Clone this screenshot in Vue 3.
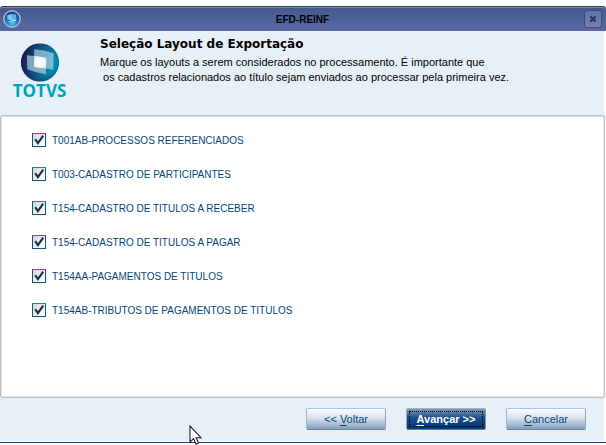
<template>
  <div class="wizard">
    <header class="titlebar">
      <svg class="app-icon" viewBox="0 0 18 18" aria-hidden="true">
        <defs>
          <radialGradient id="orb" cx="50%" cy="80%" r="70%">
            <stop offset="0" stop-color="#3cc0f4" />
            <stop offset="0.55" stop-color="#1a78c4" />
            <stop offset="1" stop-color="#0b4a96" />
          </radialGradient>
        </defs>
        <circle cx="9" cy="9" r="8.2" fill="url(#orb)" stroke="#b3b8bd" stroke-width="1.4" />
        <path d="M4.4 5.4 L6.8 4.6 V9.4 L4.4 8.9 Z" fill="#8fcdf2" />
        <path d="M8.4 4.2 L13 4.4 V10.2 L8.4 9.4 Z" fill="#5fb1e8" />
        <path d="M7.8 4.2 V9.8 L12.8 10.8" fill="none" stroke="#e9f6fe" stroke-width="1" />
        <path d="M6 11.4 L11.4 12.6" stroke="#a9dcf7" stroke-width="0.9" />
      </svg>
      <h1 class="window-title">EFD-REINF</h1>
      <button type="button" class="close" aria-label="Fechar">
        <svg viewBox="0 0 8 8" aria-hidden="true">
          <path d="M1.4 1.6 L6.6 6.4 M6.6 1.6 L1.4 6.4" stroke="#2a3150" stroke-width="2" />
        </svg>
      </button>
    </header>

    <section class="intro">
      <div class="brand">
        <svg class="globe" viewBox="0 0 40 40" aria-hidden="true">
          <defs>
            <linearGradient id="ball" x1="0" y1="0.3" x2="1" y2="0.6">
              <stop offset="0" stop-color="#1c1650" />
              <stop offset="0.45" stop-color="#12527f" />
              <stop offset="1" stop-color="#00a3c4" />
            </linearGradient>
            <radialGradient id="shade" cx="50%" cy="45%" r="55%">
              <stop offset="0.7" stop-color="#12124a" stop-opacity="0" />
              <stop offset="1" stop-color="#12124a" stop-opacity="0.35" />
            </radialGradient>
            <radialGradient id="glow" cx="45%" cy="55%" r="65%">
              <stop offset="0" stop-color="#fff" />
              <stop offset="0.65" stop-color="#f0f9fd" />
              <stop offset="1" stop-color="#c3e0ee" />
            </radialGradient>
          </defs>
          <circle cx="20" cy="20" r="19.6" fill="url(#ball)" />
          <circle cx="20" cy="20" r="19.6" fill="url(#shade)" />
          <path d="M14 6.5 Q24 7 34 10.5 L33.5 27.5 Q24 25.5 14 24.5 Z" fill="#b5d8e8" fill-opacity="0.65" />
          <path d="M6.5 12.5 Q16 13 26.5 15.5 L26 32 Q16 31 7 27 Z" fill="#b5cfe2" fill-opacity="0.7" />
          <path d="M14 13 Q20 13.8 26.5 15.5 L26.2 26.2 Q20 25 14 24.5 Z" fill="url(#glow)" />
        </svg>
        <span class="brand-name">TOTVS</span>
      </div>
      <div class="intro-text">
        <h2>Seleção Layout de Exportação</h2>
        <p>{{ description }}</p>
      </div>
    </section>

    <main class="panel">
      <label v-for="layout in layouts" :key="layout.label" class="layout-item">
        <input v-model="layout.checked" type="checkbox" />
        <span>{{ layout.label }}</span>
      </label>
    </main>

    <footer class="footer">
      <div class="actions">
        <button type="button" class="btn">&lt;&lt; <u>V</u>oltar</button>
        <button type="button" class="btn primary"><u>A</u>vançar &gt;&gt;</button>
        <button type="button" class="btn"><u>C</u>ancelar</button>
      </div>
    </footer>

    <svg class="cursor" viewBox="0 0 13 20" aria-hidden="true">
      <path
        d="M1 1 V17 L4.6 13.6 L7.2 19.2 L9.6 18.1 L7.1 12.7 H12 Z"
        fill="#fff"
        stroke="#171b33"
        stroke-width="1.1"
      />
    </svg>
  </div>
</template>

<script setup>
import { ref } from 'vue';

const description =
  'Marque os layouts a serem considerados no processamento. É importante que\n os cadastros relacionados ao título sejam enviados ao processar pela primeira vez.';

const layouts = ref([
  { label: 'T001AB-PROCESSOS REFERENCIADOS', checked: true },
  { label: 'T003-CADASTRO DE PARTICIPANTES', checked: true },
  { label: 'T154-CADASTRO DE TITULOS A RECEBER', checked: true },
  { label: 'T154-CADASTRO DE TITULOS A PAGAR', checked: true },
  { label: 'T154AA-PAGAMENTOS DE TITULOS', checked: true },
  { label: 'T154AB-TRIBUTOS DE PAGAMENTOS DE TITULOS', checked: true },
]);
</script>

<style>
body {
  background: #fff;
}
</style>

<style scoped>
.wizard {
  position: relative;
  box-sizing: border-box;
  display: flex;
  flex-direction: column;
  min-height: 100vh;
  padding: 6px 0 2px;
  font-family: "Liberation Sans", Arial, sans-serif;
  font-size: 11px;
  color: #000;
}
.titlebar {
  display: flex;
  align-items: center;
  height: 24px;
  padding: 0 4px 0 3px;
  border-top: 1px solid #39413f;
  border-radius: 3px 3px 0 0;
  background: linear-gradient(#43588f, #5c69a2);
  box-shadow: inset 0 1px 0 #7488ac;
}
.app-icon {
  width: 18px;
  height: 18px;
}
.window-title {
  flex: 1;
  margin: 0;
  font-size: 10px;
  font-weight: bold;
  text-align: center;
}
.close {
  display: flex;
  align-items: center;
  justify-content: center;
  width: 18px;
  height: 18px;
  padding: 0;
  border: 1px solid #3c4a7c;
  border-radius: 3px;
  background: linear-gradient(#6273a5, #7481b0);
}
.close svg {
  width: 8px;
  height: 8px;
}
.intro {
  display: flex;
  height: 84px;
  margin-right: 2px;
  background: #e8f0f7;
}
.brand {
  display: flex;
  flex-direction: column;
  align-items: center;
  width: 79px;
  margin-right: 21px;
  padding-top: 12px;
}
.globe {
  width: 40px;
  height: 39px;
}
.brand-name {
  font-family: "Open Sans", sans-serif;
  font-size: 17px;
  font-weight: bold;
  line-height: 18px;
  color: #00a0bf;
}
.intro-text {
  padding-top: 5px;
}
.intro-text h2 {
  margin: 0;
  font-family: "DejaVu Sans", Verdana, sans-serif;
  font-size: 12px;
  line-height: 16px;
}
.intro-text p {
  margin: 3px 0 0;
  line-height: 15px;
  white-space: pre-wrap;
}
.panel {
  flex: 1;
  display: flex;
  flex-direction: column;
  gap: 20px;
  margin-right: 1px;
  padding: 17px 31px;
  border: 1px solid #c0c0c0;
  border-radius: 2px;
  background: #fff;
  box-shadow: inset 0 0 0 1px #e4e4e4;
}
.layout-item {
  display: flex;
  align-items: center;
  align-self: flex-start;
  gap: 6px;
  height: 14px;
  font-size: 10px;
  color: #04467c;
}
.layout-item input {
  appearance: none;
  box-sizing: border-box;
  width: 14px;
  height: 14px;
  margin: 0;
  border: 1px solid #0b5878;
  border-top-color: #1489b4;
  background: linear-gradient(135deg, #d3d7da, #fff);
}
.layout-item input:checked {
  background:
    url('data:image/svg+xml,<svg xmlns="http://www.w3.org/2000/svg" viewBox="0 0 12 12"><path d="M2.2 5.2 L4.9 9.2 L10.2 1.6" fill="none" stroke="%23252d3b" stroke-width="2.1"/></svg>') center / 12px 12px no-repeat,
    linear-gradient(135deg, #d3d7da, #fff);
}
.footer {
  border-bottom: 1px solid #174b7c;
}
.actions {
  display: flex;
  justify-content: flex-end;
  gap: 20px;
  margin: 0 2px 1px 0;
  padding: 10px 18px 11px;
  background: #e8f0f7;
}
.btn {
  width: 80px;
  height: 22px;
  padding: 0;
  border: 1px solid;
  border-color: #a5c5ec #8ba6c4 #6985a3 #98b9df;
  border-radius: 2px;
  background: linear-gradient(#fafcfe, #d9e3ed 45%, #839fbc);
  font-family: inherit;
  font-size: 11px;
  color: #04467c;
}
.btn u {
  text-underline-offset: 2px;
  text-decoration-skip-ink: none;
}
.btn.primary {
  border-color: #b0b0b0 #7f93a8 #5d7f9f #9ba8b5;
  background: linear-gradient(#7d9cbd, #1a4e88 45%, #003a78);
  font-weight: bold;
  color: #fff;
  outline: 1px dotted #000;
  outline-offset: -4px;
}
.cursor {
  position: absolute;
  left: 189px;
  bottom: 0;
  width: 13px;
  height: 20px;
}
</style>
